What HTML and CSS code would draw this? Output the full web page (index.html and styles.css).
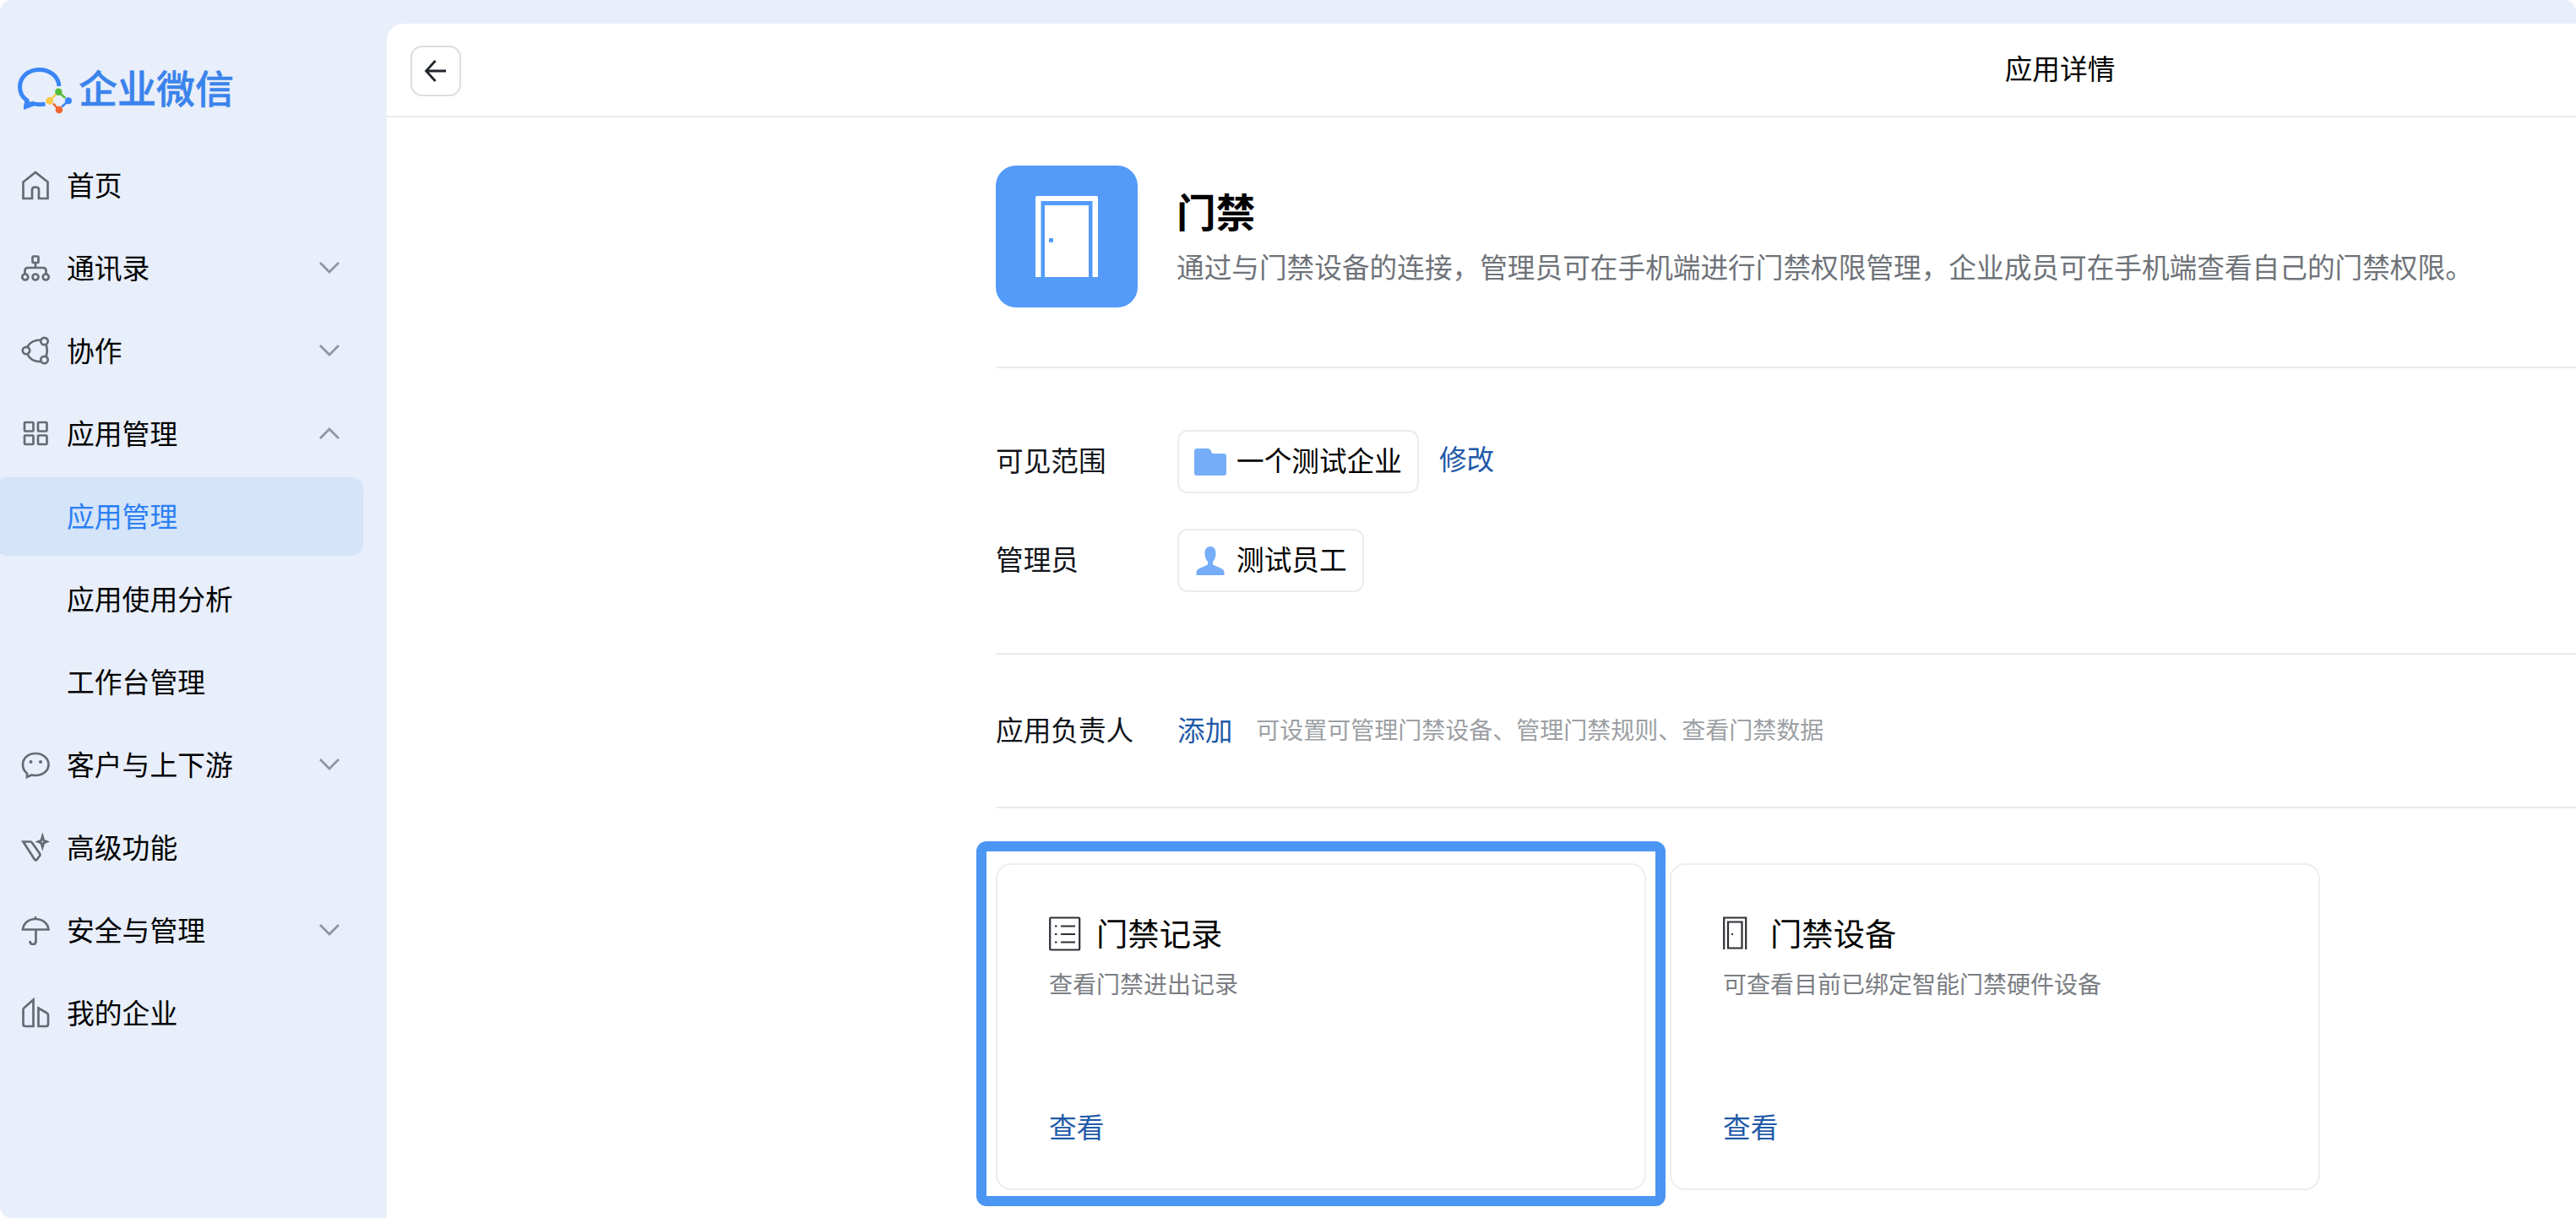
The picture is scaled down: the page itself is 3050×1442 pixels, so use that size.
FILE: index.html
```html
<!DOCTYPE html>
<html lang="zh-CN">
<head>
<meta charset="utf-8">
<title>应用详情</title>
<link rel="stylesheet" href="styles.css">
</head>
<body>
<div class="app">
  <aside class="sidebar">
    <div class="brand">
      <svg class="brand-mark" viewBox="0 0 68 58">
        <path d="M51 24C50 12 40 4.500 27.500 4.500C14 4.500 4.500 13.500 4.500 25C4.500 32 8 37.500 13 41L12 47L20 44.500Q26 46.500 34.500 45.300" fill="none" stroke="#3a86f7" stroke-width="5"/>
        <path d="M9 52l1.500-13 13 7.500z" fill="#3a86f7"/>
        <g stroke-width="2.500" fill="none">
          <path d="M50.300 31l8 7" stroke="#53bd3a"/><path d="M62 41.500l-8 7" stroke="#3a86f7"/>
          <path d="M51 52.500l-7-8" stroke="#f0642d"/><path d="M40 41.500l7-8" stroke="#f7ca45"/>
        </g>
        <circle cx="50.300" cy="30.700" r="4.200" fill="#53bd3a"/><circle cx="62" cy="41.300" r="4" fill="#3a86f7"/>
        <circle cx="51" cy="52" r="4.300" fill="#f0642d"/><circle cx="39.700" cy="41.300" r="4.400" fill="#f7ca45"/>
      </svg>
      <span class="brand-name">企业微信</span>
    </div>
    <nav class="nav">
      <a class="nav-item">
        <svg class="icon" viewBox="0 0 36 36"><path d="M3.500 14.500L18 3l14.500 11.500V34H22V23.500q0-3-4-3t-4 3V34H3.500z"/></svg>
        <span>首页</span>
      </a>
      <a class="nav-item">
        <svg class="icon" viewBox="0 0 36 36"><rect x="14.500" y="4.500" width="7" height="7.500" rx="1"/><path d="M18 12v6M5.500 25v-3.500q0-3.500 3.500-3.500h18q3.500 0 3.500 3.500V25"/><circle cx="5.800" cy="29" r="3.500"/><circle cx="18" cy="29" r="3.500"/><circle cx="30.200" cy="29" r="3.500"/></svg>
        <span>通讯录</span>
        <svg class="chevron" viewBox="0 0 26 16"><path d="M2 2l11 11L24 2"/></svg>
      </a>
      <a class="nav-item">
        <svg class="icon" viewBox="0 0 36 36"><circle cx="7" cy="18" r="4.200"/><circle cx="28.500" cy="7" r="4.200"/><circle cx="28.500" cy="29" r="4.200"/><path d="M8.500 13.500Q13 5.500 24 5.500M8.500 22.500Q13 31.500 24 31M30.500 11q2.500 7 0 14"/></svg>
        <span>协作</span>
        <svg class="chevron" viewBox="0 0 26 16"><path d="M2 2l11 11L24 2"/></svg>
      </a>
      <a class="nav-item">
        <svg class="icon" viewBox="0 0 36 36"><rect x="5" y="5" width="10.500" height="10.500" rx="1"/><rect x="21" y="5" width="10.500" height="10.500" rx="1"/><rect x="5" y="20.500" width="10.500" height="10.500" rx="1"/><rect x="21" y="20.500" width="10.500" height="10.500" rx="1"/></svg>
        <span>应用管理</span>
        <svg class="chevron" viewBox="0 0 26 16"><path d="M2 14L13 3l11 11"/></svg>
      </a>
      <a class="nav-item nav-sub nav-active"><span>应用管理</span></a>
      <a class="nav-item nav-sub"><span>应用使用分析</span></a>
      <a class="nav-item nav-sub"><span>工作台管理</span></a>
      <a class="nav-item">
        <svg class="icon" viewBox="0 0 36 36"><path d="M8 28.500Q3 24.500 3 18.500C3 10.500 9.500 5 18 5s15.500 5.500 15.500 13S27 31 18 31q-2 0-4.500-.5L8 33z"/><circle class="dot" cx="12.500" cy="15" r="2"/><circle class="dot" cx="24" cy="15" r="2"/></svg>
        <span>客户与上下游</span>
        <svg class="chevron" viewBox="0 0 26 16"><path d="M2 2l11 11L24 2"/></svg>
      </a>
      <a class="nav-item">
        <svg class="icon" viewBox="0 0 36 36"><path d="M3.500 11.500H12q1.200 0 2 1.200L23 25.500q1 1.500-.2 3l-3 4q-1.600 1.800-3-.3z"/><path d="M26.300 5l1.500 5 3.700 1.500-3.700 1.500-1.500 5-1.500-5-3.700-1.500 3.700-1.500z"/></svg>
        <span>高级功能</span>
      </a>
      <a class="nav-item">
        <svg class="icon" viewBox="0 0 36 36"><path d="M3 17.500C4 9.500 10 5 18 5s14.500 4.500 15.500 12.500zM18 2v3M18.500 18v13q0 4-3.500 4t-3.500-4"/></svg>
        <span>安全与管理</span>
        <svg class="chevron" viewBox="0 0 26 16"><path d="M2 2l11 11L24 2"/></svg>
      </a>
      <a class="nav-item">
        <svg class="icon" viewBox="0 0 36 36"><path d="M15.500 2.500V34H6q-2.500 0-2.500-2.500V14.500q0-1.500 1-2.300zM21.500 12.500l9.500 5.500q2 1.200 2 3V31.500q0 2.500-2.500 2.500h-9z"/></svg>
        <span>我的企业</span>
      </a>
    </nav>
  </aside>
  <div class="main">
    <header class="header">
      <button class="back"><svg viewBox="0 0 30 30"><path d="M27 15H4M14.500 3L3.500 15l11 12"/></svg></button>
      <h1 class="header-title">应用详情</h1>
    </header>
    <div class="content">
      <section class="intro">
        <svg class="app-icon" viewBox="0 0 168 168">
          <rect width="168" height="168" rx="24" fill="#549bf9"/>
          <path d="M47 132V38q0-2 2-2h70q2 0 2 2v94h-6.500V42h-61v90z" fill="#fff"/>
          <rect x="58" y="47" width="52" height="85" fill="#fff"/>
          <rect x="63" y="86" width="5" height="5" rx="1" fill="#549bf9"/>
        </svg>
        <div class="intro-text">
          <h2>门禁</h2>
          <p>通过与门禁设备的连接，管理员可在手机端进行门禁权限管理，企业成员可在手机端查看自己的门禁权限。</p>
        </div>
      </section>
      <section class="scope">
        <div class="row">
          <span class="label">可见范围</span>
          <span class="tag">
            <svg viewBox="0 0 38 32"><path d="M3 0h13q2 0 3 1.500L21.500 6H35q3 0 3 3v20q0 3-3 3H3q-3 0-3-3V3q0-3 3-3z" fill="#76adf8"/></svg>
            <span>一个测试企业</span>
          </span>
          <a class="link link-edit">修改</a>
        </div>
        <div class="row">
          <span class="label">管理员</span>
          <span class="tag">
            <svg viewBox="0 0 38 34"><path d="M19 0c4.500 0 6.800 3.800 6.500 9-.2 4-1.500 7-3.500 9v3.500l10 4.500q3.500 1.700 3.500 5V34h-33v-3q0-3.300 3.500-5l10-4.500V18c-2-2-3.300-5-3.500-9C12.200 3.800 14.500 0 19 0z" fill="#76adf8"/></svg>
            <span>测试员工</span>
          </span>
        </div>
      </section>
      <section class="owner">
        <span class="label">应用负责人</span>
        <a class="link">添加</a>
        <span class="hint">可设置可管理门禁设备、管理门禁规则、查看门禁数据</span>
      </section>
      <section class="cards">
        <div class="card card-marked">
          <h3>
            <svg viewBox="0 0 38 42"><rect x="1.200" y="1.500" width="35" height="38" rx="1"/><path d="M14 11.500h17M14 21h17M14 30.500h17M7 11.500h2.500M7 21h2.500M7 30.500h2.500"/></svg>
            <span>门禁记录</span>
          </h3>
          <p>查看门禁进出记录</p>
          <a class="link">查看</a>
        </div>
        <div class="card">
          <h3>
            <svg viewBox="0 0 38 42"><path d="M1.200 39V1.500h26V39M6 6.500h16.500v31H6z"/><path d="M10 21h2"/></svg>
            <span>门禁设备</span>
          </h3>
          <p>可查看目前已绑定智能门禁硬件设备</p>
          <a class="link">查看</a>
        </div>
      </section>
    </div>
  </div>
</div>
</body>
</html>
```

FILE: styles.css
```css
* { box-sizing: border-box; }

html { background: #fff; }

body {
  margin: 0;
  font-family: "Noto Sans CJK SC", "Noto Sans", sans-serif;
  font-size: 32.67px;
  line-height: 48px;
  color: #000;
  overflow: hidden;
}

h1, h2, h3, p { margin: 0; font-weight: 400; }

.app {
  display: flex;
  width: 3050px;
  height: 1442px;
  padding-top: 28px;
  overflow: hidden;
  background: #e8eefa;
  border-radius: 14px 14px 0 14px;
}

/* Sidebar */
.sidebar { flex: 0 0 458px; }

.brand {
  display: flex;
  align-items: center;
  gap: 6px;
  height: 142px;
  padding: 16px 0 0 19px;
}

.brand-mark {
  width: 68px;
  height: 58px;
}

.brand-name {
  margin-bottom: 10px;
  font-size: 46px;
  font-weight: 500;
  line-height: 56px;
  color: #3a83ec;
  -webkit-text-stroke: 0.5px #3a83ec;
}

.nav-item {
  display: flex;
  align-items: center;
  height: 98px;
  padding: 0 55px 0 24px;
  font-size: 32.8px;
}

.nav-item > span {
  flex: 1;
  margin-bottom: 3px;
}

.icon {
  width: 36px;
  height: 36px;
  margin-right: 19px;
  fill: none;
  stroke: #666b73;
  stroke-width: 2.7;
}

.icon .dot { fill: #666b73; stroke: none; }

.chevron {
  width: 26px;
  height: 16px;
  fill: none;
  stroke: #9096a0;
  stroke-width: 2.8;
}

.nav-sub { padding-left: 79px; }

.nav-active {
  height: 93px;
  margin: 3px 28px 2px -6px;
  padding-left: 85px;
  border-radius: 14px;
  background: #d4e4f9;
  color: #2b7ff3;
}

/* Main panel: wider than the window, so it runs off the right edge */
.main {
  flex: 0 0 3962px;
  background: #fff;
  border-top-left-radius: 20px;
}

.header {
  display: grid;
  grid-template-columns: 60px 1fr 60px;
  align-items: center;
  height: 111px;
  padding: 2px 28px 0;
  border-bottom: 2px solid #ebebed;
}

.back {
  display: grid;
  place-items: center;
  width: 60px;
  height: 60px;
  padding: 0;
  border: 2px solid #dcdde0;
  border-radius: 14px;
  background: #fff;
}

.back svg {
  width: 30px;
  height: 30px;
  fill: none;
  stroke: #22252b;
  stroke-width: 2.8;
}

.header-title {
  margin-bottom: 8px;
  font-size: 32.67px;
  line-height: 48px;
  text-align: center;
}

.content { margin-left: 721px; }

.intro {
  display: flex;
  gap: 46px;
  height: 297px;
  padding-top: 57px;
  border-bottom: 2px solid #ebebed;
}

.app-icon { width: 168px; height: 168px; }

.intro-text { padding-top: 21px; }

.intro-text h2 {
  font-size: 46.67px;
  font-weight: 700;
  line-height: 64px;
}

.intro-text p {
  margin-top: 10px;
  color: #6f7379;
}

.scope {
  display: flex;
  flex-direction: column;
  gap: 42px;
  height: 339px;
  padding-top: 73px;
  border-bottom: 2px solid #ebebed;
}

.row {
  display: flex;
  align-items: center;
  height: 75px;
}

.label {
  flex: 0 0 215px;
  margin-bottom: 5px;
  color: #111419;
}

.tag {
  display: flex;
  align-items: center;
  height: 75px;
  padding: 0 18px;
  border: 2px solid #ececee;
  border-radius: 12px;
}

.tag svg {
  width: 38px;
  height: 34px;
  margin-right: 12px;
}

.tag span { margin-bottom: 5px; }

.link { color: #1f5aa8; }

.link-edit { margin: 0 0 9px 24px; }

.owner {
  display: flex;
  align-items: center;
  height: 182px;
  border-bottom: 2px solid #ebebed;
}

.owner .link { margin-bottom: 5px; }

.hint {
  margin-bottom: 4px;
  margin-left: 28px;
  font-size: 28px;
  color: #9c9fa4;
}

.cards {
  display: flex;
  gap: 28px;
  padding-top: 65px;
}

.card {
  position: relative;
  display: flex;
  flex-direction: column;
  width: 770px;
  height: 387px;
  padding: 57px 61px 50px;
  border: 2px solid #eeeef0;
  border-radius: 18px;
}

.card h3 {
  display: flex;
  align-items: center;
  height: 50px;
  font-size: 37.33px;
  line-height: 46px;
}

.card h3 span { margin-bottom: 4px; }

.card h3 svg {
  width: 38px;
  height: 42px;
  margin-right: 18px;
  fill: none;
  stroke: #2c2f35;
  stroke-width: 2.2;
}

.card p {
  margin-top: 10px;
  font-size: 28px;
  line-height: 46px;
  color: #7b7e84;
}

.card .link { margin-top: auto; }

/* Frame drawn over the card that is called out */
.card-marked::after {
  content: "";
  position: absolute;
  inset: -28px -25px -21px -25px;
  border: 12px solid #4b95f3;
  border-radius: 12px;
}
```
